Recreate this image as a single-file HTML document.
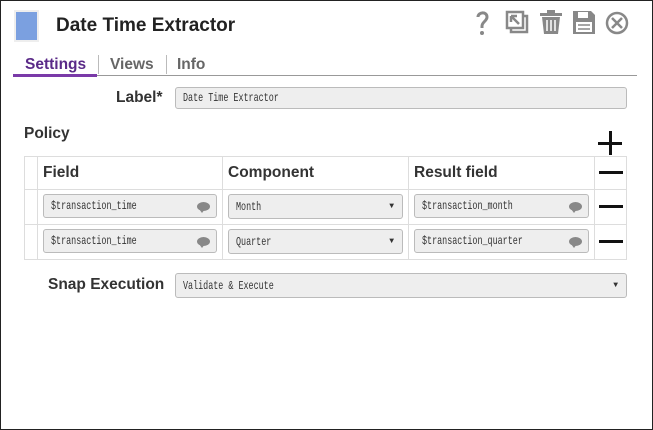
<!DOCTYPE html>
<html><head><style>
*{box-sizing:border-box;margin:0;padding:0}
body{width:653px;height:430px;background:#fff;font-family:"Liberation Sans",sans-serif;position:relative;overflow:hidden}
.frame{position:absolute;left:0;top:0;width:653px;height:430px;border:1px solid #222}
.a{position:absolute}
.inp{position:absolute;background:#eee;border:1px solid #bbb;border-radius:3px;font-family:"Liberation Mono",monospace;font-size:12px;color:#333;padding-left:7px;display:flex;align-items:center;white-space:nowrap}
.inp i{font-style:normal;display:inline-block;transform:scaleX(0.7);transform-origin:left center}
.b{font-weight:bold;color:#333;font-size:15.5px}
.bub{position:absolute;right:6px;top:7px;width:13px;height:9px;background:#888;border-radius:50%}
.bub:after{content:"";position:absolute;left:2px;bottom:-2px;border-left:3px solid transparent;border-right:3px solid transparent;border-top:4px solid #888}
.arr{position:absolute;right:8px;font-size:8px;color:#333}
.bar{position:absolute;width:24px;height:3px;background:#111}
</style></head><body>
<div class="frame"></div>
<div class="a" style="left:14px;top:10px;width:25px;height:32px;background:#eee"></div>
<div class="a" style="left:16px;top:12px;width:21px;height:28px;background:#7ba0e0"></div>
<div class="a b" style="left:56px;top:15px;font-size:19px;color:#222">Date Time Extractor</div>
<svg class="a" style="left:470px;top:5px" width="170" height="40" viewBox="0 0 170 40">
<g fill="none" stroke="#888" stroke-width="3">
<path d="M8 12c0-5 9-6 9 0c0 4-5 5-5 9v2"/>
<path d="M37 7h16v16h-16z" stroke-width="2.5"/><path d="M53 11h4v16h-16v-4" stroke-width="2.5"/>
<circle cx="147" cy="18" r="10" stroke-width="2.5"/><path d="M142 13l10 10M152 13l-10 10" stroke-width="2.5"/>
</g>
<circle cx="12" cy="28" r="2" fill="#888"/>
<path d="M41 11l8 8M41 11v6M41 11h6" stroke="#888" stroke-width="2.5" fill="none"/>
<g fill="#888"><rect x="70" y="8" width="22" height="3"/><rect x="77" y="5" width="8" height="3"/>
<path d="M72 12h18l-2 17h-14z"/></g>
<g stroke="#fff" stroke-width="1.5"><path d="M77 15v11M81 15v11M85 15v11"/></g>
<path d="M103 6h18l4 4v19h-22z" fill="#888"/><rect x="108" y="7" width="10" height="6" fill="#fff"/><rect x="106" y="17" width="16" height="10" fill="#fff"/><path d="M108 20h12M108 24h12" stroke="#888" stroke-width="1.5"/>
</svg>
<div class="a b" style="left:25px;top:56px;color:#5a2a88">Settings</div>
<div class="a b" style="left:110px;top:56px;color:#666">Views</div>
<div class="a b" style="left:177px;top:56px;color:#666">Info</div>
<div class="a" style="left:98px;top:55px;width:1px;height:19px;background:#bbb"></div>
<div class="a" style="left:166px;top:55px;width:1px;height:19px;background:#bbb"></div>
<div class="a" style="left:13px;top:75px;width:624px;height:1px;background:#999"></div>
<div class="a" style="left:13px;top:74px;width:84px;height:3px;background:#7a3aa8"></div>
<div class="a b" style="left:116px;top:89px">Label*</div>
<div class="inp" style="left:175px;top:87px;width:452px;height:22px"><i>Date Time Extractor</i></div>
<div class="a b" style="left:24px;top:125px">Policy</div>
<div class="a" style="left:598px;top:142px;width:24px;height:3px;background:#111"></div>
<div class="a" style="left:608.5px;top:131px;width:3px;height:24px;background:#111"></div>
<table class="a" style="left:24px;top:156px;border-collapse:collapse;width:603px">
<tr style="height:33px"><td style="width:13px;border:1px solid #ddd"></td><td style="width:185px;border:1px solid #ddd"></td><td style="width:186px;border:1px solid #ddd"></td><td style="width:186px;border:1px solid #ddd"></td><td style="border:1px solid #ddd"></td></tr>
<tr style="height:35px"><td style="border:1px solid #ddd"></td><td style="border:1px solid #ddd"></td><td style="border:1px solid #ddd"></td><td style="border:1px solid #ddd"></td><td style="border:1px solid #ddd"></td></tr>
<tr style="height:35px"><td style="border:1px solid #ddd"></td><td style="border:1px solid #ddd"></td><td style="border:1px solid #ddd"></td><td style="border:1px solid #ddd"></td><td style="border:1px solid #ddd"></td></tr>
</table>
<div class="a b" style="left:43px;top:164px">Field</div>
<div class="a b" style="left:228px;top:164px">Component</div>
<div class="a b" style="left:414px;top:164px">Result field</div>
<div class="bar" style="left:599px;top:171px"></div>
<div class="bar" style="left:599px;top:205px"></div>
<div class="bar" style="left:599px;top:240px"></div>
<div class="inp" style="left:43px;top:194px;width:174px;height:24px"><i>$transaction_time</i><span class="bub"></span></div>
<div class="inp" style="left:228px;top:194px;width:175px;height:25px"><i>Month</i><span class="arr">▼</span></div>
<div class="inp" style="left:414px;top:194px;width:175px;height:24px"><i>$transaction_month</i><span class="bub"></span></div>
<div class="inp" style="left:43px;top:229px;width:174px;height:24px"><i>$transaction_time</i><span class="bub"></span></div>
<div class="inp" style="left:228px;top:229px;width:175px;height:25px"><i>Quarter</i><span class="arr">▼</span></div>
<div class="inp" style="left:414px;top:229px;width:175px;height:24px"><i>$transaction_quarter</i><span class="bub"></span></div>
<div class="a b" style="left:48px;top:276px">Snap Execution</div>
<div class="inp" style="left:175px;top:273px;width:452px;height:25px"><i>Validate &amp; Execute</i><span class="arr">▼</span></div>
</body></html>
